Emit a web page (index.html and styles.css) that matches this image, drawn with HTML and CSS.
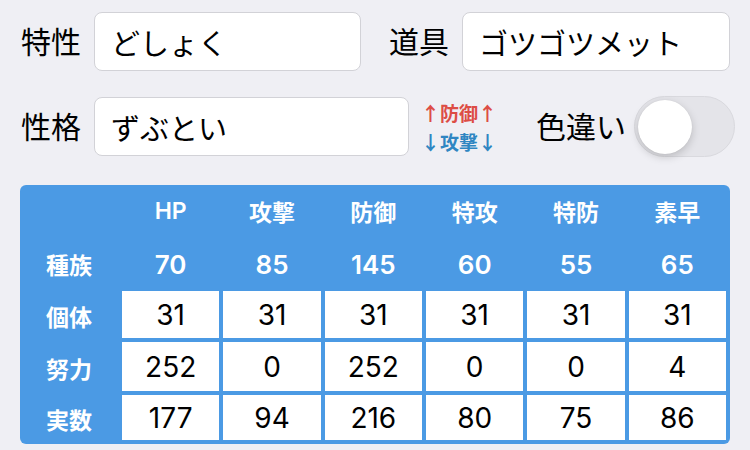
FILE: index.html
```html
<!DOCTYPE html>
<html lang="ja">
<head>
  <meta charset="UTF-8">
  <meta name="viewport" content="width=device-width, initial-scale=1.0">
  <title>ステータス</title>
  <link rel="stylesheet" href="styles.css">
</head>
<body>
  <div class="row row-top">
    <span class="label">特性</span>
    <div class="field field-ability">どしょく</div>
    <span class="label label-item">道具</span>
    <div class="field field-item">ゴツゴツメット</div>
  </div>

  <div class="row row-nature">
    <span class="label">性格</span>
    <div class="field field-nature">ずぶとい</div>
    <div class="mods">
      <div class="mod-up">↑防御↑</div>
      <div class="mod-down">↓攻撃↓</div>
    </div>
    <span class="label label-shiny">色違い</span>
    <div class="toggle"><div class="knob"></div></div>
  </div>

  <div class="stats">
    <div class="head"></div>
    <div class="head">HP</div>
    <div class="head">攻撃</div>
    <div class="head">防御</div>
    <div class="head">特攻</div>
    <div class="head">特防</div>
    <div class="head">素早</div>

    <div class="head">種族</div>
    <div class="head base">70</div>
    <div class="head base">85</div>
    <div class="head base">145</div>
    <div class="head base">60</div>
    <div class="head base">55</div>
    <div class="head base">65</div>

    <div class="head">個体</div>
    <div class="cell">31</div>
    <div class="cell">31</div>
    <div class="cell">31</div>
    <div class="cell">31</div>
    <div class="cell">31</div>
    <div class="cell">31</div>

    <div class="head">努力</div>
    <div class="cell">252</div>
    <div class="cell">0</div>
    <div class="cell">252</div>
    <div class="cell">0</div>
    <div class="cell">0</div>
    <div class="cell">4</div>

    <div class="head">実数</div>
    <div class="cell">177</div>
    <div class="cell">94</div>
    <div class="cell">216</div>
    <div class="cell">80</div>
    <div class="cell">75</div>
    <div class="cell">86</div>
  </div>

  <div class="note">残り：2</div>
</body>
</html>
```

FILE: styles.css
```css
body {
  margin: 0;
  padding: 0;
  background-color: #efeff4;
  font-family: Inter, "Noto Sans CJK JP", sans-serif;
  color: #000;
  overflow: hidden;
}
.row {
  display: flex;
  align-items: center;
  padding-left: 21px;
}
.row-top {
  padding-top: 12px;
}
.row-nature {
  margin-top: 25px;
}
.label {
  font-size: 30px;
  line-height: 1;
  margin-right: 13px;
}
.label-item {
  margin-left: 28px;
}
.field {
  box-sizing: border-box;
  height: 59px;
  display: flex;
  align-items: center;
  padding-left: 16px;
  background-color: #fff;
  border: 1px solid #d2d2d7;
  border-radius: 8px;
  font-size: 29px;
}
.field-ability {
  width: 267px;
}
.field-item {
  width: 268px;
}
.field-nature {
  width: 315px;
}
.mods {
  width: 78px;
  margin-left: 12px;
  font-family: "Noto Sans CJK JP", sans-serif;
  font-size: 19px;
  font-weight: bold;
  line-height: 29px;
  white-space: nowrap;
}
.mod-up {
  color: #dd4d45;
}
.mod-down {
  color: #2f86c2;
}
.label-shiny {
  margin-left: 37px;
  margin-right: 8px;
}
.toggle {
  box-sizing: border-box;
  width: 101px;
  height: 61px;
  border-radius: 31px;
  background-color: #e4e4e9;
  border: 1px solid #d9d9de;
  display: flex;
  align-items: center;
  padding-left: 3px;
}
.knob {
  width: 54px;
  height: 54px;
  border-radius: 50%;
  background-color: #fff;
  box-shadow: 0 3px 8px rgba(0, 0, 0, 0.18), 0 0 1px rgba(0, 0, 0, 0.1);
}
.stats {
  margin: 28px 0 0 20px;
  width: 710px;
  box-sizing: border-box;
  padding: 0 4px 4px 0;
  background-color: #4b9ae4;
  border-radius: 6px;
  display: grid;
  grid-template-columns: 98px repeat(6, 1fr);
  grid-template-rows: 49px 49px 47px 49px 45px;
  column-gap: 4px;
  row-gap: 4px;
}
.head {
  display: flex;
  align-items: center;
  justify-content: center;
  color: #fff;
  font-size: 23px;
  font-weight: 600;
  padding-top: 3px;
}
.base {
  font-size: 26px;
}
.cell {
  display: flex;
  align-items: center;
  justify-content: center;
  background-color: #fff;
  font-size: 28px;
}
.note {
  margin-top: 2px;
  padding-left: 556px;
  font-size: 18px;
  color: #555;
}
```
